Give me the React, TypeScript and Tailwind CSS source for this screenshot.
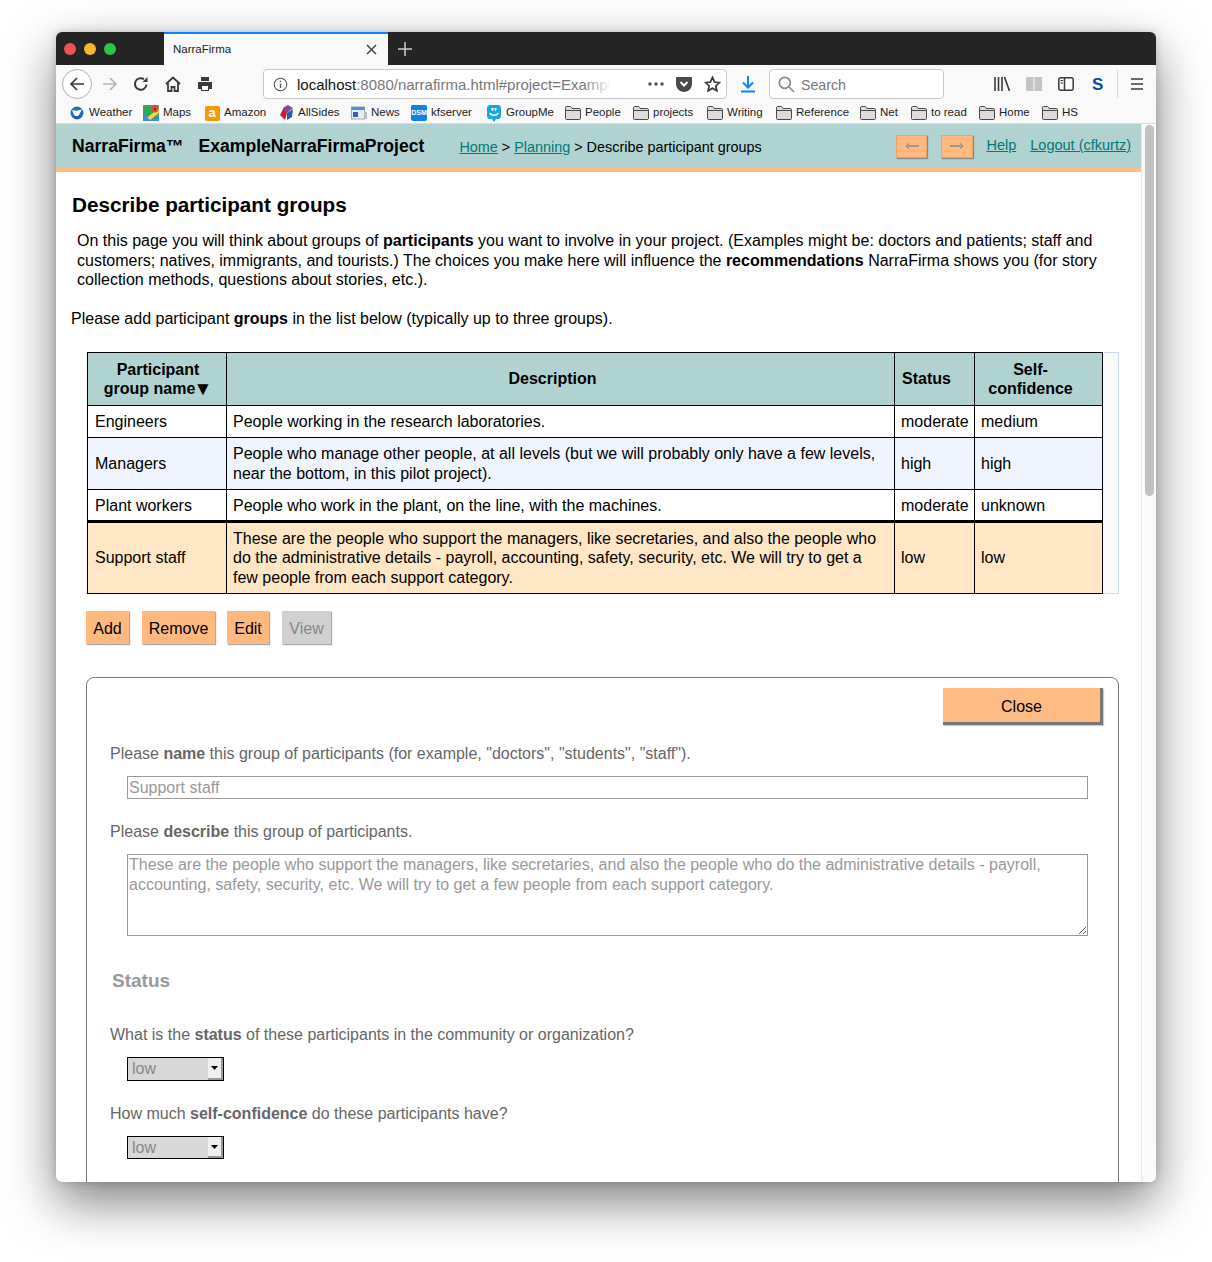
import React from "react";

const F = () => (
  <svg width="16" height="14" viewBox="0 0 16 14" className="shrink-0">
    <path d="M.5 12.5V1.8c0-.7.5-1.3 1.2-1.3h3.6c.5 0 .9.3 1.1.7l.6 1.3h7.3c.7 0 1.2.5 1.2 1.2v8.8c0 .7-.5 1-1.2 1H1.7c-.7 0-1.2-.3-1.2-1z" fill="#dcdcdc" stroke="#4a4a4a" />
    <path d="M.5 4.5h15" stroke="#4a4a4a" />
  </svg>
);

const Weather = () => (
  <svg width="14" height="14" viewBox="0 0 14 14"><circle cx="7" cy="7" r="6.5" fill="#1e6fc0" /><path d="M2 4c3 1 7 1 10-1l-3 6-2 3-3-3z" fill="#fff" /><path d="M3 9c3 2 6 1 8-1-1 3-3 5-4 5-2 0-3-2-4-4z" fill="#1e5fa8" /></svg>
);
const Maps = () => (
  <svg width="16" height="16" viewBox="0 0 16 16"><rect width="16" height="16" rx="1" fill="#35a853" /><path d="M0 16 16 3v5L6 16z" fill="#f8d24a" /><path d="M0 8l8 8H0z" fill="#4285f4" /><path d="M8 16l8-6v6z" fill="#4285f4" /><circle cx="12" cy="4" r="3.4" fill="#e2493b" /><circle cx="12" cy="4" r="1.2" fill="#8b1f15" /></svg>
);
const Amazon = () => (
  <div className="w-[15px] h-[15px] rounded-[2px] bg-[#f5990c] text-white text-[13px] leading-[13px] font-bold text-center">a</div>
);
const AllSides = () => (
  <svg width="15" height="16" viewBox="0 0 15 16"><path d="M4 4 7 1l1 7-2 7-5-5z" fill="#c8232c" /><path d="M4 3l5-3 5 3-6 5z" fill="#7f4a9e" /><path d="M8 8l6-4-1 8-5 3z" fill="#2d5fa8" /></svg>
);
const News = () => (
  <svg width="16" height="14" viewBox="0 0 16 14"><rect x=".5" y="1" width="13" height="12" fill="#e8eef8" stroke="#9ab" /><rect x=".5" y="1" width="13" height="3" fill="#4a90e2" /><rect x="2" y="6" width="5" height="5" fill="#3b5fb5" /><rect x="13" y="6" width="3" height="7" fill="#bbb" /></svg>
);
const Dsm = () => (
  <div className="w-[16px] h-[16px] rounded-[2px] bg-[#0a84e8] text-white text-[7px] leading-[16px] font-bold text-center">DSM</div>
);
const GroupMe = () => (
  <svg width="14" height="17" viewBox="0 0 14 17"><path d="M3 0h8c1.700 0 3 1.300 3 3v8c0 1.700-1.300 3-3 3H9l-2 3-2-3H3c-1.700 0-3-1.300-3-3V3c0-1.700 1.300-3 3-3z" fill="#1aa5e8" /><path d="M3 8c1 3 7 3 8 0" stroke="#fff" strokeWidth="1.500" fill="none" /><path d="M5.500 3v3M8.500 3v3M4 4h6" stroke="#fff" /></svg>
);

const bookmarks: [React.ReactNode, string, string][] = [
  [<Weather />, "Weather", "w-[62px]"],
  [<Maps />, "Maps", "w-[49px]"],
  [<Amazon />, "Amazon", "w-[62px]"],
  [<AllSides />, "AllSides", "w-[61px]"],
  [<News />, "News", "w-[48px]"],
  [<Dsm />, "kfserver", "w-[63px]"],
  [<GroupMe />, "GroupMe", "w-[67px]"],
  [<F />, "People", "w-[56px]"],
  [<F />, "projects", "w-[62px]"],
  [<F />, "Writing", "w-[57px]"],
  [<F />, "Reference", "w-[72px]"],
  [<F />, "Net", "w-[39px]"],
  [<F />, "to read", "w-[56px]"],
  [<F />, "Home", "w-[51px]"],
  [<F />, "HS", "w-[35px]"],
];

const tdBase = "border border-black px-[6px] align-middle";

const rows = [
  { a: "Engineers", b: <>People working in the research laboratories.</>, c: "moderate", d: "medium", bg: "bg-white", h: "h-[32px]", pad: "" },
  { a: "Managers", b: <>People who manage other people, at all levels (but we will probably only have a few levels,<br />near the bottom, in this pilot project).</>, c: "high", d: "high", bg: "bg-[#eff4ff]", h: "h-[52px]", pad: "" },
  { a: "Plant workers", b: <>People who work in the plant, on the line, with the machines.</>, c: "moderate", d: "unknown", bg: "bg-white", h: "h-[32px]", pad: " pt-[2px]" },
];

const Select = ({ cls }: { cls: string }) => (
  <div className={"ml-[40px] w-[97px] flex border border-black bg-[#d8d8d8] " + cls}>
    <div className="flex-1 pl-[4px] text-[#888] text-[16px] leading-[22px]">low</div>
    <div className="w-[15px] bg-[#efefef] border-r-2 border-b-2 border-r-[#999] border-b-[#999] flex items-center justify-center">
      <svg width="7" height="4" viewBox="0 0 7 4"><path d="M0 0h7L3.500 4z" fill="#000" /></svg>
    </div>
  </div>
);

const ToolBtn = ({ label, cls }: { label: string; cls: string }) => (
  <div className={"h-[33px] pt-[2px] flex items-center justify-center text-[16px] shadow-[1px_1px_1px_#aaa] " + cls}>{label}</div>
);

export default function App() {
  return (
    <div className="w-[1212px] h-[1262px] bg-white pl-[56px] pt-[32px] overflow-hidden font-['Liberation_Sans',Arial,sans-serif]">
      <div className="w-[1100px] h-[1150px] rounded-[6px] overflow-hidden flex flex-col bg-white shadow-[0_20px_50px_rgba(0,0,0,0.5),0_0_8px_rgba(0,0,0,0.18)]">
        {/* tab strip */}
        <div className="h-[33px] shrink-0 bg-[#252525] flex items-stretch">
          <div className="w-[108px] flex items-center gap-[8px] pl-[8px]">
            <span className="w-[12px] h-[12px] rounded-full bg-[#f0524f]" />
            <span className="w-[12px] h-[12px] rounded-full bg-[#f7b52e]" />
            <span className="w-[12px] h-[12px] rounded-full bg-[#28c840]" />
          </div>
          <div className="w-[224px] bg-[#f9f9fa] border-t-2 border-[#0a84ff] flex items-center pl-[9px] pr-[11px] text-[11.500px] text-[#222]">
            <span className="flex-1">NarraFirma</span>
            <svg width="11" height="11" viewBox="0 0 11 11"><path d="M1 1l9 9M10 1l-9 9" stroke="#444" strokeWidth="1.500" /></svg>
          </div>
          <div className="ml-[10px] flex items-center">
            <svg width="14" height="14" viewBox="0 0 14 14"><path d="M7 0v14M0 7h14" stroke="#ccc" strokeWidth="1.500" /></svg>
          </div>
        </div>
        {/* nav bar */}
        <div className="h-[36px] shrink-0 pt-[2px] bg-[#f9f9fa] flex items-center relative">
          <div className="ml-[6px] w-[30px] h-[30px] rounded-full border border-[#b1b1b3] bg-white flex items-center justify-center">
            <svg width="16" height="16" viewBox="0 0 16 16" fill="none" stroke="#3a3a3a" strokeWidth="1.700"><path d="M15 8H2M8 2 2 8l6 6" /></svg>
          </div>
          <svg className="ml-[10px]" width="16" height="16" viewBox="0 0 16 16" fill="none" stroke="#b5b5b5" strokeWidth="1.700"><path d="M1 8h13M8 2l6 6-6 6" /></svg>
          <svg className="ml-[15px]" width="16" height="16" viewBox="0 0 16 16" fill="none" stroke="#3a3a3a" strokeWidth="2"><path d="M13.500 8.500A5.800 5.800 0 1 1 11 3.200" /><path d="M14.500 1v5h-5z" fill="#3a3a3a" stroke="none" /></svg>
          <svg className="ml-[16px]" width="16" height="16" viewBox="0 0 16 16" fill="none" stroke="#3a3a3a" strokeWidth="1.800"><path d="M1 8l7-6.500L15 8M3 7v8h3.500v-4h3v4H13V7" /></svg>
          <svg className="ml-[16px]" width="16" height="16" viewBox="0 0 16 16"><path d="M4 1h8v4H4zM1 6h14v7h-3v2H4v-2H1z" fill="#3a3a3a" /><path d="M5 10h6v4H5z" fill="#fff" /></svg>
          <div className="ml-[50px] w-[464px] h-[30px] rounded-[4px] border border-[#c9c9c9] bg-white flex items-center pl-[9px] overflow-hidden">
            <svg width="15" height="15" viewBox="0 0 15 15" fill="none" stroke="#555" strokeWidth="1.100"><circle cx="7.500" cy="7.500" r="6.300" /><path d="M7.500 6.500V11" strokeWidth="1.400" /><path d="M7.500 3.700v1.400" strokeWidth="1.400" /></svg>
            <div className="ml-[9px] mt-[2px] w-[314px] h-[20px] overflow-hidden whitespace-nowrap text-[15px] leading-[20px] text-[#777] relative">
              <span className="text-[#111]">localhost</span>:8080/narrafirma.html#project=Exampl
              <span className="absolute right-0 top-0 w-[28px] h-[20px] bg-gradient-to-r from-transparent to-white" />
            </div>
            <svg className="ml-[37px]" width="16" height="4" viewBox="0 0 16 4" fill="#4a4a4a"><circle cx="2" cy="2" r="1.700" /><circle cx="8" cy="2" r="1.700" /><circle cx="14" cy="2" r="1.700" /></svg>
            <svg className="ml-[12px]" width="16" height="15" viewBox="0 0 16 15"><path d="M1 0h14c.6 0 1 .4 1 1v6c0 4-3.500 8-8 8S0 11 0 7V1c0-.6.4-1 1-1z" fill="#4a4a4a" /><path d="M4.500 5 8 8.500 11.500 5" stroke="#fff" strokeWidth="2" fill="none" /></svg>
            <svg className="ml-[12px]" width="17" height="16" viewBox="0 0 24 23" fill="none" stroke="#3a3a3a" strokeWidth="2.500"><path d="M12 2l3 6.700 7 .8-5.200 4.800 1.500 7L12 17.700l-6.300 3.600 1.500-7L2 9.500l7-.8z" /></svg>
          </div>
          <svg className="ml-[13px]" width="16" height="18" viewBox="0 0 16 18" fill="none" stroke="#0a84ff" strokeWidth="2"><path d="M8 1v11M3 7.500l5 5 5-5M1 16.500h14" /></svg>
          <div className="ml-[13px] w-[175px] h-[30px] rounded-[4px] border border-[#c9c9c9] bg-white flex items-center pl-[8px]">
            <svg width="17" height="17" viewBox="0 0 17 17" fill="none" stroke="#888" strokeWidth="1.700"><circle cx="6.800" cy="6.800" r="5.500" /><path d="M11 11l5 5" /></svg>
            <span className="ml-[6px] mt-[3px] text-[14.200px] text-[#777]">Search</span>
          </div>
          <svg className="ml-[50px]" width="16" height="14" viewBox="0 0 16 14" fill="none" stroke="#3a3a3a" strokeWidth="1.600"><path d="M1 0v14M4.500 0v14M8 0v14M10.500 0l5 14" /></svg>
          <svg className="ml-[16px]" width="16" height="14" viewBox="0 0 16 14"><path d="M0 0h7.500v14H0zM8.500 0H16v14H8.500z" fill="#c4c4c4" /></svg>
          <svg className="ml-[16px]" width="16" height="14" viewBox="0 0 16 14" fill="none" stroke="#3a3a3a" strokeWidth="1.500"><rect x=".8" y=".8" width="14.400" height="12.400" rx="2" /><path d="M6.500 1v12" /><path d="M2.500 3.500h2.500M2.500 6h2.500" strokeWidth="1" /></svg>
          <span className="ml-[18px] text-[17px] font-bold text-[#0f4a9e] leading-none">S</span>
          <div className="ml-[14px] w-px h-[28px] bg-[#d8d8d8]" />
          <svg className="ml-[13px]" width="12" height="12" viewBox="0 0 12 12" stroke="#3a3a3a" strokeWidth="1.500"><path d="M0 1h12M0 6h12M0 11h12" /></svg>
        </div>
        {/* bookmarks */}
        <div className="h-[23px] shrink-0 pt-[2px] bg-[#f9f9fa] border-b border-[#dcdcdc] flex items-center pl-[13px] text-[11.500px] text-[#222]">
          {bookmarks.map(([icon, label, w], i) => (
            <div key={i} className={"flex items-center gap-[4px] shrink-0 " + w + (i === 0 ? " ml-0" : " ml-[12px]")}>
              <span className="w-[16px] flex justify-center shrink-0">{icon}</span>
              <span className="whitespace-nowrap">{label}</span>
            </div>
          ))}
        </div>
        {/* page + scrollbar */}
        <div className="flex-1 flex min-h-0">
          <div className="w-[1085px] flex flex-col overflow-hidden text-black">
            <div className="h-[44px] shrink-0 bg-[#b0d2d1] flex items-center pl-[16px]">
              <span className="font-bold text-[17.600px]">NarraFirma™</span>
              <span className="ml-[15px] font-bold text-[17.600px]">ExampleNarraFirmaProject</span>
              <span className="ml-[35px] text-[14.400px] mt-[3px]"><a className="text-[#00797a] underline">Home</a> &gt; <a className="text-[#00797a] underline">Planning</a> &gt; Describe participant groups</span>
              <div className="ml-auto flex items-center">
                <div className="w-[31px] h-[23px] bg-[#ffb97f] border border-[#f0a060] shadow-[1px_1px_1px_#888] flex items-center justify-center">
                  <svg width="14" height="6" viewBox="0 0 14 6"><path d="M14 3H3" stroke="#888" strokeWidth="1.500" fill="none" /><path d="M4 .5 1 3l3 2.500" stroke="#777" strokeWidth="1" fill="none" /></svg>
                </div>
                <div className="ml-[14px] w-[32px] h-[23px] bg-[#ffb97f] border border-[#f0a060] shadow-[1px_1px_1px_#888] flex items-center justify-center">
                  <svg width="14" height="6" viewBox="0 0 14 6"><path d="M0 3h11" stroke="#888" strokeWidth="1.500" fill="none" /><path d="M10 .5 13 3l-3 2.500" stroke="#777" strokeWidth="1" fill="none" /></svg>
                </div>
                <a className="ml-[13px] text-[#00797a] underline text-[14.500px]">Help</a>
                <a className="ml-[14px] mr-[10px] text-[#00797a] underline text-[14.500px]">Logout (cfkurtz)</a>
              </div>
            </div>
            <div className="h-[4px] shrink-0 bg-[#ffbb84]" />
            <h1 className="ml-[16px] mt-[20px] text-[20.700px] leading-[26px] font-bold">Describe participant groups</h1>
            <p className="ml-[21px] mr-[30px] mt-[13px] text-[16px] leading-[19.500px]">
              On this page you will think about groups of <b>participants</b> you want to involve in your project. (Examples might be: doctors and patients; staff and customers; natives, immigrants, and tourists.) The choices you make here will influence the <b>recommendations</b> NarraFirma shows you (for story collection methods, questions about stories, etc.).
            </p>
            <p className="ml-[15px] mt-[19px] text-[16px] leading-[19.500px]">Please add participant <b>groups</b> in the list below (typically up to three groups).</p>
            {/* grid */}
            <div className="ml-[30px] mt-[24px] w-[1033px] border border-l-0 border-[#c9d7ef] bg-[#fafafa] shrink-0">
              <table className="w-[1015px] border-collapse table-fixed text-[16px] leading-[19.500px] ml-[1px] -mt-px -mb-px">
                <colgroup>
                  <col className="w-[139px]" />
                  <col className="w-[668px]" />
                  <col className="w-[80px]" />
                  <col className="w-[128px]" />
                </colgroup>
                <thead>
                  <tr className="bg-[#b0d2d1] h-[53px] font-bold">
                    <th className={tdBase + " text-center pl-[8px]"}>Participant group name<span className="-ml-[2px] text-[19px] leading-none align-[-1px]">▼</span></th>
                    <th className={tdBase + " text-center pr-[22px]"}>Description</th>
                    <th className={tdBase + " text-left pl-[7px]"}>Status</th>
                    <th className={tdBase + " text-center pr-[22px]"}>Self-confidence</th>
                  </tr>
                </thead>
                <tbody>
                  {rows.map((r) => (
                    <tr key={r.a} className={r.bg + " " + r.h}>
                      <td className={tdBase + " pl-[7px]" + r.pad}>{r.a}</td>
                      <td className={tdBase + r.pad}>{r.b}</td>
                      <td className={tdBase + r.pad}>{r.c}</td>
                      <td className={tdBase + r.pad}>{r.d}</td>
                    </tr>
                  ))}
                  <tr className="bg-[#ffe6c4] h-[72px] border-t-[3px] border-black">
                    <td className={tdBase + " pl-[7px] border-t-[3px]"}>Support staff</td>
                    <td className={tdBase + " border-t-[3px]"}>These are the people who support the managers, like secretaries, and also the people who do the administrative details - payroll, accounting, safety, security, etc. We will try to get a few people from each support category.</td>
                    <td className={tdBase + " border-t-[3px]"}>low</td>
                    <td className={tdBase + " border-t-[3px]"}>low</td>
                  </tr>
                </tbody>
              </table>
            </div>
            <div className="ml-[30px] mt-[17px] flex shrink-0">
              <ToolBtn label="Add" cls="w-[43px] bg-[#ffb97f]" />
              <ToolBtn label="Remove" cls="ml-[13px] w-[73px] bg-[#ffb97f]" />
              <ToolBtn label="Edit" cls="ml-[12px] w-[42px] bg-[#ffb97f]" />
              <ToolBtn label="View" cls="ml-[13px] w-[49px] bg-[#d0d0d0] text-[#888]" />
            </div>
            {/* detail panel */}
            <div className="ml-[30px] mt-[33px] w-[1033px] shrink-0 rounded-[8px] border border-[#777] text-[#666] text-[16px] pb-[60px]">
              <div className="flex justify-end pt-[10px] pr-[15px]">
                <div className="w-[160px] h-[37px] pt-[3px] bg-[#ffbb84] text-black flex items-center justify-center border-r-[3px] border-b-[3px] border-[#777] shadow-[1px_1px_1px_#ccc]">Close</div>
              </div>
              <p className="ml-[23px] mt-[19px] leading-[20px]">Please <b>name</b> this group of participants (for example, "doctors", "students", "staff").</p>
              <input readOnly value="Support staff" className="block ml-[40px] mt-[12px] w-[961px] h-[23px] border border-[#999] px-[1px] text-[16px] text-[#999] outline-none" />
              <p className="ml-[23px] mt-[23px] leading-[20px]">Please <b>describe</b> this group of participants.</p>
              <textarea readOnly value="These are the people who support the managers, like secretaries, and also the people who do the administrative details - payroll, accounting, safety, security, etc. We will try to get a few people from each support category." className="block ml-[40px] mt-[12px] w-[961px] h-[82px] border border-[#999] px-[1px] py-0 text-[16px] leading-[20px] text-[#999] outline-none" />
              <h2 className="ml-[25px] mt-[33px] text-[19px] leading-[24px] font-bold text-[#999]">Status</h2>
              <p className="ml-[23px] mt-[32px] leading-[20px]">What is the <b>status</b> of these participants in the community or organization?</p>
              <Select cls="mt-[12px] h-[24px]" />
              <p className="ml-[23px] mt-[23px] leading-[20px]">How much <b>self-confidence</b> do these participants have?</p>
              <Select cls="mt-[12px] h-[23px]" />
            </div>
          </div>
          <div className="w-[15px] shrink-0 bg-[#fafafa] border-l border-[#e8e8e8] pt-px flex justify-center">
            <div className="w-[9px] h-[371px] rounded-full bg-[#c1c1c1]" />
          </div>
        </div>
      </div>
    </div>
  );
}
